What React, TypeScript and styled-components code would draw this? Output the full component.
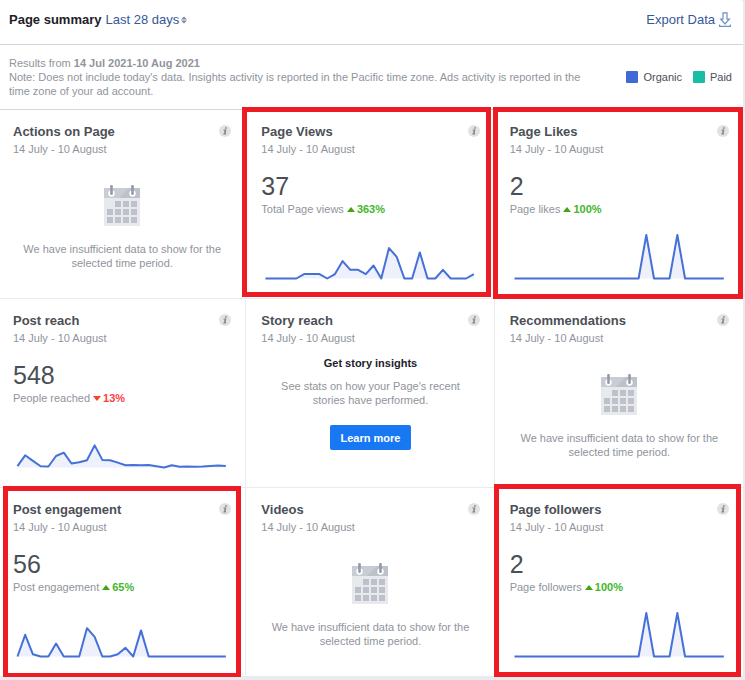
import React from "react";
import styled, { createGlobalStyle } from "styled-components";

const GlobalStyle = createGlobalStyle`
  * { box-sizing: border-box; }
  body {
    margin: 0;
    background: #e9ebee;
    font-family: "Liberation Sans", Arial, Helvetica, sans-serif;
    font-size: 11px;
    line-height: 14px;
    color: #90949c;
    overflow-x: hidden;
  }
`;

const Panel = styled.main`
  margin: 0 2px 0 -2px;
  background: #fff;
  border-radius: 3px;
`;

const Header = styled.header`
  display: flex;
  align-items: center;
  justify-content: space-between;
  height: 45px;
  padding: 0 12px 5px 11px;
  border-bottom: 1px solid #d3d6db;
`;

const HeaderGroup = styled.div`
  display: flex;
  align-items: center;
  gap: 4px;
`;

const PageTitle = styled.h1`
  margin: 0;
  font-size: 13px;
  line-height: 16px;
  color: #1d2129;
`;

const LinkButton = styled.button<{ $gap: number }>`
  display: flex;
  align-items: center;
  gap: ${(p) => p.$gap}px;
  padding: 0;
  border: 0;
  background: none;
  font: inherit;
  font-size: 13px;
  line-height: 16px;
  color: #365899;
  cursor: pointer;
`;

const NoteBar = styled.section`
  display: flex;
  align-items: center;
  justify-content: space-between;
  gap: 24px;
  padding: 11px;
  border-bottom: 1px solid #d3d6db;
`;

const Note = styled.p`
  margin: 0;
  max-width: 580px;
`;

const Legend = styled.ul`
  display: flex;
  flex: none;
  gap: 11px;
  margin: 0;
  padding: 0;
  list-style: none;
  color: #4b4f56;
`;

const LegendItem = styled.li<{ $color: string }>`
  display: flex;
  align-items: center;
  gap: 5px;
  &::before {
    content: "";
    width: 12px;
    height: 12px;
    border-radius: 1px;
    background: ${(p) => p.$color};
  }
`;

const Grid = styled.div`
  display: grid;
  grid-template-columns: repeat(3, 1fr);
`;

const Card = styled.article`
  position: relative;
  display: flex;
  flex-direction: column;
  min-height: 189px;
  padding: 14px 14px 15px 15px;
  border-bottom: 1px solid #e9ebee;
  &:not(:nth-child(3n)) { border-right: 1px solid #e9ebee; }
`;

const CardHead = styled.div`
  display: flex;
  justify-content: space-between;
  align-items: flex-start;
`;

const CardTitle = styled.h2`
  margin: 0;
  font-size: 13px;
  line-height: 16px;
  color: #4b4f56;
`;

const InfoButton = styled.button`
  display: flex;
  padding: 1px 0 3px;
  border: 0;
  background: none;
  cursor: pointer;
`;

const Period = styled.p`
  margin: 2px 0 0;
`;

const Total = styled.p`
  margin: 16px 0 0;
  font-size: 25px;
  line-height: 28px;
  color: #4b4f56;
`;

const Metric = styled.p`
  display: flex;
  align-items: center;
  gap: 3px;
  margin: 2px 0 0;
`;

const Change = styled.strong<{ $down?: boolean }>`
  display: flex;
  align-items: center;
  gap: 2px;
  color: ${(p) => (p.$down ? "#fa3e3e" : "#42b72a")};
`;

const ChartSvg = styled.svg`
  display: block;
  width: 100%;
  height: 50px;
  margin-top: auto;
`;

const Centered = styled.div<{ $top: number }>`
  display: flex;
  flex-direction: column;
  align-items: center;
  margin-top: ${(p) => p.$top}px;
  text-align: center;
`;

const CenterText = styled.p<{ $top: number; $width: number }>`
  margin: ${(p) => p.$top}px 0 0;
  max-width: ${(p) => p.$width}px;
`;

const StoryTitle = styled.h3`
  margin: 0;
  font-size: 11px;
  line-height: 14px;
  color: #1d2129;
`;

const PrimaryButton = styled.button`
  margin-top: 18px;
  height: 25px;
  padding: 0 11px;
  border: 0;
  border-radius: 2px;
  background: #1877f2;
  font: inherit;
  font-weight: bold;
  color: #fff;
  cursor: pointer;
`;

const Highlight = styled.div<{ $inset: string }>`
  position: absolute;
  inset: ${(p) => p.$inset};
  z-index: 1;
  border: 5px solid #ed1c24;
  pointer-events: none;
`;

const InfoIcon = () => (
  <svg width="12" height="12" viewBox="0 0 12 12" aria-hidden="true">
    <circle cx="6" cy="6" r="6" fill="#e2e2e2" />
    <path d="M6.2 2.2h1.7l-.3 1.5H5.9zM4.6 4.6h2.8l-.8 3.9h.7l-.2 1H4.1l.2-1H5l.5-2.9h-1z" fill="#858585" />
  </svg>
);

const SortIcon = () => (
  <svg width="6" height="8" viewBox="0 0 6 8" aria-hidden="true">
    <path d="M3 0.5L6 3.5H0zM0 4.5h6L3 7.5z" fill="#7f8694" />
  </svg>
);

const DownloadIcon = () => (
  <svg width="12" height="16" viewBox="0 0 12 16" fill="none" stroke="#6f8fc9" aria-hidden="true">
    <path d="M4 .8h4v6.4h2.3L6 12 1.7 7.2H4z" strokeWidth="1.2" />
    <path d="M.6 12.4v2h10.8v-2" strokeWidth="1.2" />
  </svg>
);

const UpIcon = () => (
  <svg width="8" height="5" viewBox="0 0 8 5" aria-hidden="true">
    <path d="M4 0l4 5H0z" fill="#42a50f" />
  </svg>
);

const DownIcon = () => (
  <svg width="8" height="5" viewBox="0 0 8 5" aria-hidden="true">
    <path d="M0 0h8L4 5z" fill="#f2452c" />
  </svg>
);

const CALENDAR_CELLS = [
  [11, 16], [19, 16], [27, 16],
  [3, 24], [11, 24], [19, 24], [27, 24],
  [3, 32], [11, 32], [19, 32], [27, 32],
];

const CalendarIcon = () => (
  <svg width="36" height="41" viewBox="0 0 36 41" aria-hidden="true">
    <path d="M0 3h36v38H0z" fill="#e7e9ed" />
    <path d="M0 3h36v10H0z" fill="#bcc1ca" />
    <path d="M0 3h25L15 13H0z" fill="#c8ccd4" />
    {[7.5, 28.5].map((x) => (
      <g key={x}>
        <circle cx={x} cy="8.5" r="3.2" fill="#fff" />
        <path d={`M${x} 1.2v7.6`} stroke="#9399a8" strokeWidth="2.6" strokeLinecap="round" />
      </g>
    ))}
    {CALENDAR_CELLS.map(([x, y]) => (
      <rect key={`${x}-${y}`} x={x} y={y} width="6" height="6" fill="#bcc1ca" />
    ))}
  </svg>
);

const STEP = 209 / 27;

function Sparkline({ values, max, label }: { values: number[]; max: number; label: string }) {
  const base = 45.5;
  const points = values.map((v, i) => `${(4.5 + i * STEP).toFixed(1)} ${(base - (v / max) * 43.5).toFixed(1)}`);
  return (
    <ChartSvg viewBox="0 0 219 50" preserveAspectRatio="none" role="img" aria-label={label}>
      <path d={`M4.5 ${base}L${points.join("L")}L213.5 ${base}z`} fill="#eef1fb" />
      <path
        d={`M${points.join("L")}`}
        fill="none"
        stroke="#4470d8"
        strokeWidth="2"
        strokeLinejoin="round"
        vectorEffect="non-scaling-stroke"
      />
    </ChartSvg>
  );
}

type CardData = {
  title: string;
  kind: "empty" | "story" | "metric";
  total?: number;
  metric?: string;
  change?: number;
  values?: number[];
  max?: number;
  highlight?: string;
};

const TWO_PEAKS = Array.from({ length: 28 }, (_, i) => (i === 17 || i === 21 ? 1 : 0));

const CARDS: CardData[] = [
  { title: "Actions on Page", kind: "empty" },
  {
    title: "Page Views", kind: "metric", total: 37, metric: "Total Page views", change: 363, max: 10,
    values: [0, 0, 0, 0, 0, 1, 1, 1, 0, 1, 4, 2, 2, 1, 3, 0, 7, 5, 0, 0, 6, 0, 0, 2, 0, 0, 0, 1],
    highlight: "-3px 3px 1px -4px",
  },
  {
    title: "Page Likes", kind: "metric", total: 2, metric: "Page likes", change: 100, max: 1,
    values: TWO_PEAKS, highlight: "-3px 0 -1px -2px",
  },
  {
    title: "Post reach", kind: "metric", total: 548, metric: "People reached", change: -13, max: 132,
    values: [4, 37, 20, 4, 3, 35, 45, 12, 16, 22, 67, 23, 22, 15, 7, 8, 7, 8, 4, 0, 7, 2, 3, 2, 3, 5, 6, 5],
  },
  { title: "Story reach", kind: "story" },
  { title: "Recommendations", kind: "empty" },
  {
    title: "Post engagement", kind: "metric", total: 56, metric: "Post engagement", change: 65, max: 20,
    values: [0, 10, 1, 0, 0, 6, 0, 0, 0, 13, 9, 0, 0, 1, 4, 0, 12, 0, 0, 0, 0, 0, 0, 0, 0, 0, 0, 0],
    highlight: "-2px 4px -2px 5px",
  },
  { title: "Videos", kind: "empty" },
  {
    title: "Page followers", kind: "metric", total: 2, metric: "Page followers", change: 100, max: 1,
    values: TWO_PEAKS, highlight: "-4px 2px -1px -1px",
  },
];

function CardBody({ card }: { card: CardData }) {
  if (card.kind === "empty") {
    return (
      <Centered $top={29}>
        <CalendarIcon />
        <CenterText $top={16} $width={214}>
          We have insufficient data to show for the selected time period.
        </CenterText>
      </Centered>
    );
  }
  if (card.kind === "story") {
    return (
      <Centered $top={11}>
        <StoryTitle>Get story insights</StoryTitle>
        <CenterText $top={9} $width={190}>See stats on how your Page's recent stories have performed.</CenterText>
        <PrimaryButton type="button">Learn more</PrimaryButton>
      </Centered>
    );
  }
  const change = card.change ?? 0;
  return (
    <>
      <Total>{card.total}</Total>
      <Metric>
        {card.metric}
        <Change $down={change < 0}>
          {change < 0 ? <DownIcon /> : <UpIcon />}
          {Math.abs(change)}%
        </Change>
      </Metric>
      <Sparkline values={card.values ?? []} max={card.max ?? 1} label={`${card.title} trend`} />
    </>
  );
}

export default function App() {
  return (
    <>
      <GlobalStyle />
      <Panel>
        <Header>
          <HeaderGroup>
            <PageTitle>Page summary</PageTitle>
            <LinkButton type="button" $gap={2}>
              Last 28 days
              <SortIcon />
            </LinkButton>
          </HeaderGroup>
          <LinkButton type="button" $gap={4}>
            Export Data
            <DownloadIcon />
          </LinkButton>
        </Header>
        <NoteBar>
          <Note>
            Results from <strong>14 Jul 2021-10 Aug 2021</strong>
            <br />
            Note: Does not include today's data. Insights activity is reported in the Pacific time zone. Ads activity is
            reported in the time zone of your ad account.
          </Note>
          <Legend>
            <LegendItem $color="#4069d6">Organic</LegendItem>
            <LegendItem $color="#17bda4">Paid</LegendItem>
          </Legend>
        </NoteBar>
        <Grid>
          {CARDS.map((card) => (
            <Card key={card.title}>
              <CardHead>
                <CardTitle>{card.title}</CardTitle>
                <InfoButton type="button" aria-label={`About ${card.title}`}>
                  <InfoIcon />
                </InfoButton>
              </CardHead>
              <Period>14 July - 10 August</Period>
              <CardBody card={card} />
              {card.highlight && <Highlight $inset={card.highlight} />}
            </Card>
          ))}
        </Grid>
      </Panel>
    </>
  );
}
